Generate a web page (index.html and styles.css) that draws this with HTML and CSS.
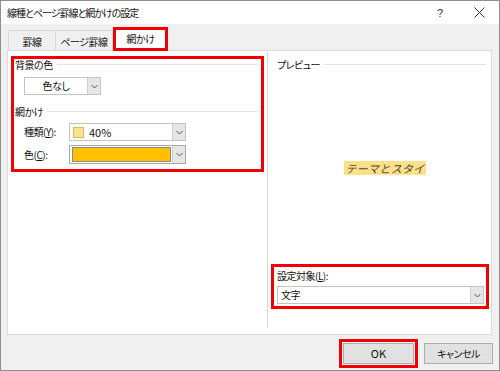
FILE: index.html
```html
<!DOCTYPE html>
<html lang="ja">
<head>
<meta charset="utf-8">
<title>線種とページ罫線と網かけの設定</title>
<link rel="stylesheet" href="styles.css">
</head>
<body>
<div class="window">
  <div class="titlebar">
    <span class="title">線種とページ罫線と網かけの設定</span>
    <span class="help">?</span>
    <span class="close"><svg width="11" height="11" viewBox="0 0 11 11"><path d="M0.5 0.5L10.5 10.5M10.5 0.5L0.5 10.5" stroke="#333" stroke-width="1" fill="none"/></svg></span>
  </div>
  <div class="tabs">
    <div class="tab t1">罫線</div>
    <div class="tab t2">ページ罫線</div>
    <div class="tab active">網かけ</div>
  </div>
  <div class="panel">
    <div class="left">
      <div class="redbox shading">
        <div class="group-head"><span>背景の色</span><i class="rule"></i></div>
        <div class="combo bg-combo">
          <div class="combo-text">色なし</div>
          <div class="combo-btn"><svg width="7" height="5" viewBox="0 0 7 5"><path d="M0.5 1L3.5 4L6.5 1" stroke="#555" fill="none"/></svg></div>
        </div>
        <div class="group-head second"><span>網かけ</span><i class="rule"></i></div>
        <div class="field-row">
          <span class="label">種類(<u>Y</u>):</span>
          <div class="combo wide">
            <div class="combo-text left-text"><span class="swatch"></span><span class="latin">40%</span></div>
            <div class="combo-btn"><svg width="7" height="5" viewBox="0 0 7 5"><path d="M0.5 1L3.5 4L6.5 1" stroke="#555" fill="none"/></svg></div>
          </div>
        </div>
        <div class="field-row gap">
          <span class="label">色(<u>C</u>):</span>
          <div class="combo wide color-combo">
            <div class="combo-text"><span class="colorfill"></span></div>
            <div class="combo-btn"><svg width="7" height="5" viewBox="0 0 7 5"><path d="M0.5 1L3.5 4L6.5 1" stroke="#555" fill="none"/></svg></div>
          </div>
        </div>
      </div>
    </div>
    <div class="sep"></div>
    <div class="right">
      <div class="group-head preview-head"><span>プレビュー</span><i class="rule"></i></div>
      <div class="preview">
        <span class="sample">テーマとスタイ</span>
      </div>
      <div class="redbox target">
        <div class="target-label">設定対象(<u>L</u>):</div>
        <div class="combo target-combo">
          <div class="combo-text left-text">文字</div>
          <div class="combo-btn"><svg width="7" height="5" viewBox="0 0 7 5"><path d="M0.5 1L3.5 4L6.5 1" stroke="#555" fill="none"/></svg></div>
        </div>
      </div>
    </div>
  </div>
  <div class="footer">
    <div class="redbox okwrap"><button class="btn ok"><span class="latin">OK</span></button></div>
    <button class="btn cancel">キャンセル</button>
  </div>
</div>
</body>
</html>
```
FILE: styles.css
```css
* { box-sizing: border-box; }
html, body { margin: 0; padding: 0; }
body {
  font-family: "Noto Sans CJK JP", "Noto Sans", sans-serif;
  font-size: 10px;
  letter-spacing: -0.5px;
  color: #111;
  font-feature-settings: "palt";
  background: #fff;
}
.latin {
  font-size: 11px;
  letter-spacing: 0;
}
.window {
  width: 500px;
  height: 371px;
  border: 1px solid #8f8f8f;
  background: #f0f0f0;
  display: flex;
  flex-direction: column;
}
.titlebar {
  height: 23px;
  background: #fff;
  display: flex;
  align-items: center;
  padding-left: 6px;
  flex-shrink: 0;
}
.title {
  flex: 1;
  line-height: 14px;
  letter-spacing: -1px;
}
.help {
  width: 12px;
  font-family: "Liberation Sans", sans-serif;
  font-size: 11px;
  color: #333;
  margin-right: 25px;
}
.close {
  display: flex;
  margin-right: 14px;
}
.tabs {
  display: flex;
  align-items: flex-end;
  height: 23px;
  margin-top: 3px;
  padding-left: 7px;
  flex-shrink: 0;
}
.tab {
  height: 20px;
  border: 1px solid #d9d9d9;
  border-bottom: none;
  display: flex;
  align-items: center;
  justify-content: center;
  line-height: 12px;
  padding-top: 3px;
  background: #f0f0f0;
}
.t1 { width: 48px; }
.t2 { width: 57px; border-left: none; }
.tab.active {
  width: 55px;
  height: 24px;
  margin-bottom: -1px;
  background: #fff;
  border: 3px solid #f00000;
  padding-top: 0;
  position: relative;
  z-index: 1;
}
.panel {
  margin: 0 7px 0 6px;
  height: 285px;
  background: #fff;
  border: 1px solid #dadada;
  display: flex;
  flex-shrink: 0;
}
.left {
  width: 259px;
  padding: 5px 0 0 3px;
}
.redbox {
  border: 3px solid #f00000;
}
.shading {
  width: 253px;
  height: 116px;
  padding: 0 0 0 1px;
}
.group-head {
  display: flex;
  align-items: center;
  height: 11px;
  line-height: 11px;
  padding-right: 3px;
}
.group-head span { white-space: nowrap; }
.group-head .rule {
  flex: 1;
  height: 1px;
  background: #e3e3e3;
  margin-left: 4px;
}
.group-head.second { margin-top: 11px; }
.combo {
  display: flex;
  height: 18px;
  border: 1px solid #c3c3c3;
  background: #fff;
}
.bg-combo {
  width: 77px;
  margin: 7px 0 0 9px;
}
.combo-text {
  flex: 1;
  display: flex;
  align-items: center;
  justify-content: center;
  line-height: 12px;
}
.left-text { justify-content: flex-start; padding-left: 3px; }
.combo-btn {
  width: 13px;
  background: #e6e6e6;
  border-left: 1px solid #cfcfcf;
  display: flex;
  align-items: center;
  justify-content: center;
}
.field-row {
  display: flex;
  align-items: center;
  margin: 6px 0 0 9px;
}
.field-row.gap { margin-top: 4px; }
.label {
  width: 45px;
  line-height: 12px;
}
.wide { width: 117px; }
.swatch {
  width: 11px;
  height: 11px;
  border: 1px solid #d9b75a;
  background-color: #ffe18c;
  background-image: radial-gradient(circle, #fff3c6 0.7px, transparent 0.8px);
  background-size: 3px 3px;
  margin-right: 5px;
}
.color-combo { height: 19px; border-color: #a9a9a9; }
.color-combo .combo-text { padding: 1px 1px 1px 2px; }
.colorfill {
  display: block;
  width: 100%;
  height: 100%;
  background: #ffc000;
  border: 1px solid #8a8a8a;
}
.sep {
  width: 1px;
  background: #d4d4d4;
  margin: 1px 0 6px;
}
.right {
  flex: 1;
  display: flex;
  flex-direction: column;
  padding: 5px 2px 25px 3px;
}
.preview-head { padding-left: 6px; padding-right: 3px; margin-top: 3px; }
.preview {
  flex: 1;
  display: flex;
  align-items: center;
  justify-content: center;
  padding-left: 10px;
  padding-top: 2px;
}
.sample {
  font-size: 11px;
  line-height: 14px;
  letter-spacing: 0.3px;
  color: #444;
  padding: 0 1px;
  font-style: italic;
  font-feature-settings: normal;
  background-color: #ffdf80;
  background-image: radial-gradient(circle, #fff0bd 0.7px, transparent 0.8px);
  background-size: 3px 3px;
}
.target {
  height: 45px;
  padding: 3px 2px 0 3px;
}
.target-label { line-height: 12px; }
.target-combo { margin-top: 4px; height: 18px; }
.footer {
  flex: 1;
  display: flex;
  justify-content: flex-end;
  align-items: center;
  padding: 2px 6px 0 0;
  gap: 6px;
}
.okwrap { padding: 1px; }
.btn {
  font-family: inherit;
  font-size: 10px;
  letter-spacing: -0.5px;
  font-feature-settings: "palt";
  color: #111;
  background: #e1e1e1;
  border: 1px solid #adadad;
  height: 21px;
  padding: 0;
  line-height: 12px;
}
.ok { width: 71px; display: block; }
.cancel { width: 69px; }
```
